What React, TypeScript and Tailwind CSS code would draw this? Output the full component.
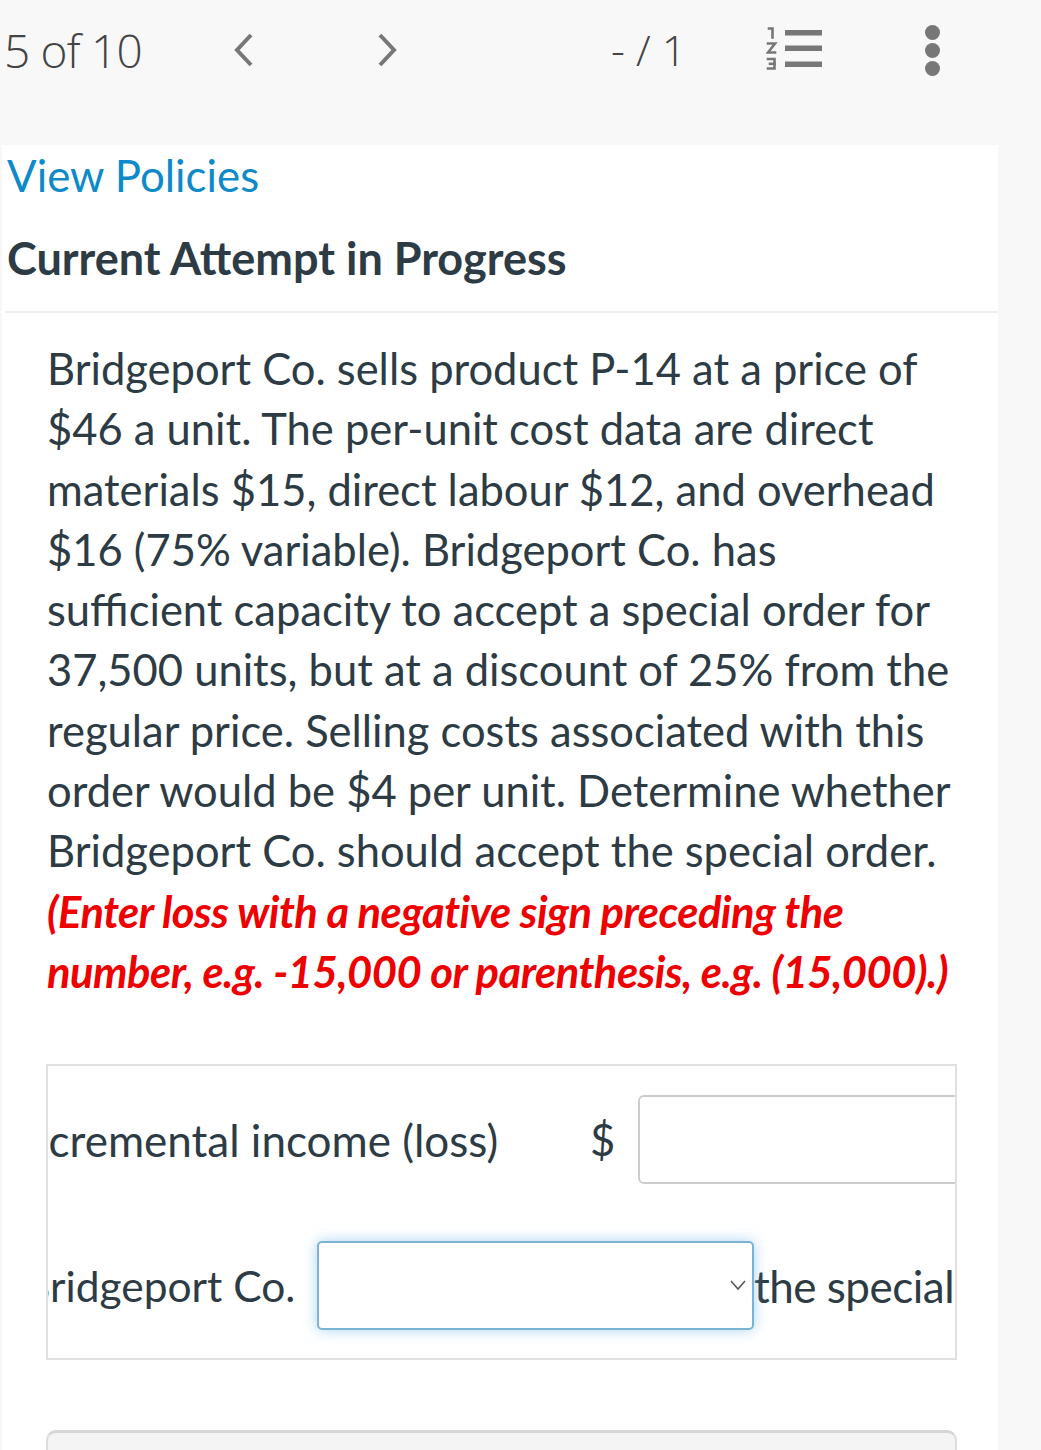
import React from "react";

const lato = { fontFamily: "Lato, 'Open Sans', sans-serif" };

function ListIcon() {
  return (
    <svg width="58" height="46" viewBox="0 0 58 46" fill="none">
      <g fill="#777">
        <rect x="19" y="3" width="37" height="5.5" />
        <rect x="19" y="18.5" width="37" height="5.5" />
        <rect x="19" y="34.5" width="37" height="5.5" />
      </g>
      <g stroke="#777" strokeWidth="2.6" strokeLinecap="square" strokeLinejoin="miter">
        <polyline points="3,1.5 6.5,1.5 6.5,10.5" />
        <polyline points="2,16.5 9,16.5 2,25.5 9,25.5" />
        <polyline points="2,32 8.5,32 8.5,41.5 2,41.5" />
        <line x1="4" y1="36.8" x2="8.5" y2="36.8" />
      </g>
    </svg>
  );
}

export default function App() {
  return (
    <div className="w-[1041px] h-[1450px] overflow-hidden bg-[#f8f8f8]">
      {/* top bar */}
      <div
        className="h-[145px] flex items-start pt-[22px] text-[#444]"
        style={{ fontFamily: "'Open Sans', sans-serif" }}
      >
        <div className="w-[231px] pl-[4px] text-[46px] font-light leading-[56px] tracking-[-0.8px] whitespace-nowrap">5 of 10</div>
        <div className="w-[145px] h-[56px] flex items-center">
          <svg width="24" height="34" viewBox="0 0 24 34" fill="none" stroke="#777" strokeWidth="4">
            <polyline points="20,2 6,17 20,32" />
          </svg>
        </div>
        <div className="w-[222px] h-[56px] flex items-center">
          <svg width="24" height="34" viewBox="0 0 24 34" fill="none" stroke="#777" strokeWidth="4">
            <polyline points="4,2 18,17 4,32" />
          </svg>
        </div>
        <div className="w-[168px] pl-[13px] text-[43px] font-light leading-[56px] whitespace-nowrap">- / 1</div>
        <div className="w-[159px] h-[56px] flex items-center">
          <ListIcon />
        </div>
        <div className="h-[56px] flex flex-col justify-center gap-[3px]">
          <div className="w-[15px] h-[15px] rounded-full bg-[#777]" />
          <div className="w-[15px] h-[15px] rounded-full bg-[#777]" />
          <div className="w-[15px] h-[15px] rounded-full bg-[#777]" />
        </div>
      </div>

      {/* content panel */}
      <div className="w-[996px] ml-[2px] bg-white h-[1305px]" style={lato}>
        <div className="pl-[5px] pt-[2px]">
          <div className="text-[43.8px] leading-[56px] text-[#0e8ac8] whitespace-nowrap">View Policies</div>
          <div className="mt-[27px] text-[45px] leading-[56px] font-bold text-[#2d3b45] whitespace-nowrap">
            Current Attempt in Progress
          </div>
        </div>
        <div className="mt-[25px] ml-[3px] border-t-2 border-[#eeeeee]" />

        <div className="pl-[45px] pt-[25px] text-[43.5px] leading-[60.3px] text-[#2d3b45] whitespace-nowrap">
          <div>Bridgeport Co. sells product P-14 at a price of</div>
          <div>$46 a unit. The per-unit cost data are direct</div>
          <div>materials $15, direct labour $12, and overhead</div>
          <div>$16 (75% variable). Bridgeport Co. has</div>
          <div>sufficient capacity to accept a special order for</div>
          <div>37,500 units, but at a discount of 25% from the</div>
          <div>regular price. Selling costs associated with this</div>
          <div>order would be $4 per unit. Determine whether</div>
          <div>Bridgeport Co. should accept the special order.</div>
          <div className="font-bold italic text-[#ee0000] tracking-[-0.5px]">
            (Enter loss with a negative sign preceding the
          </div>
          <div className="font-bold italic text-[#ee0000] tracking-[-0.5px]">
            number, e.g. -15,000 or parenthesis, e.g. (15,000).)
          </div>
        </div>

        {/* answer box */}
        <div className="mt-[63px] ml-[44px] w-[911px] h-[296px] border-2 border-[#e0e0e0] overflow-hidden pt-[29px]">
          <div className="flex items-center h-[89px]">
            <div className="shrink-0 -ml-[36px] w-[578px] text-[44px] text-[#2d3b45] whitespace-nowrap">Incremental income (loss)</div>
            <div className="shrink-0 w-[48px] text-[43.5px] text-[#2d3b45]">$</div>
            <div className="shrink-0 w-[400px] h-[89px] border-2 border-[#cccccc] rounded-[6px]" />
          </div>
          <div className="flex items-center h-[89px] mt-[57px]">
            <div className="shrink-0 -ml-[25px] w-[294px] text-[42.5px] text-[#2d3b45] whitespace-nowrap">Bridgeport Co.</div>
            <div className="shrink-0 relative w-[437px] h-[89px] border-2 border-[#7bb3d4] rounded-[5px] shadow-[0_0_14px_rgba(102,175,233,0.55)] bg-white">
              <svg className="absolute right-[6px] top-[36px]" width="16" height="12" viewBox="0 0 16 12" fill="none" stroke="#555" strokeWidth="1.5">
                <polyline points="1,2 8,10 15,2" />
              </svg>
            </div>
            <div className="shrink-0 text-[44px] text-[#2d3b45] tracking-[-0.5px] whitespace-nowrap">the special order.</div>
          </div>
        </div>

        <div className="mt-[70px] ml-[44px] w-[911px] h-[40px] border-2 border-b-0 border-[#dddddd] border-t-[3px] border-t-[#d5d5d5] rounded-t-[10px] bg-[#f4f4f4]" />
      </div>
    </div>
  );
}
